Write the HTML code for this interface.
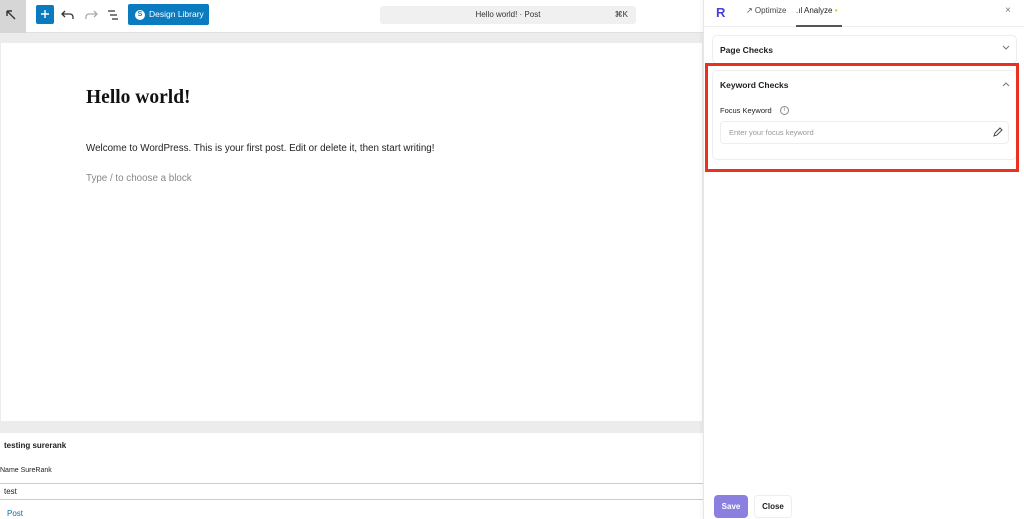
<!DOCTYPE html>
<html><head><style>
*{box-sizing:border-box;margin:0;padding:0}
body{width:1024px;height:519px;overflow:hidden;background:#fff;font-family:"Liberation Sans",sans-serif;position:relative;color:#1e1e1e}
.abs{position:absolute}
</style></head><body>
<div class="abs" style="left:0;top:0;width:703px;height:33px;background:#fff;border-bottom:1px solid #e0e0e0"></div>
<div class="abs" style="left:0;top:0;width:26px;height:33px;background:#d6d6d6"></div>
<svg class="abs" style="left:6px;top:10px" width="10" height="10" viewBox="0 0 10 10"><path d="M1 1L9 9M1 1h5M1 1v5" stroke="#333" stroke-width="1.4" fill="none"/></svg>
<div class="abs" style="left:36px;top:5px;width:18px;height:19px;background:#0a7bbf;border-radius:2px"></div>
<svg class="abs" style="left:40px;top:9px" width="10" height="10"><path d="M5 1v8M1 5h8" stroke="#fff" stroke-width="1.4"/></svg>
<svg class="abs" style="left:61px;top:9px" width="14" height="12" viewBox="0 0 14 12"><path d="M4 2L1 5l3 3M1 5h8a3 3 0 0 1 3 3v2" stroke="#333" stroke-width="1.3" fill="none"/></svg>
<svg class="abs" style="left:84px;top:9px" width="14" height="12" viewBox="0 0 14 12"><path d="M10 2l3 3-3 3M13 5H5a3 3 0 0 0-3 3v2" stroke="#aaa" stroke-width="1.3" fill="none"/></svg>
<svg class="abs" style="left:107px;top:9px" width="12" height="12" viewBox="0 0 12 12"><path d="M1 2h7M3 6h7M5 10h6" stroke="#333" stroke-width="1.3"/></svg>
<div class="abs" style="left:128px;top:4px;width:81px;height:21px;background:#0a7bbf;border-radius:2px;color:#fff;font-size:8.5px;line-height:21px;padding-left:21px">Design Library</div>
<div class="abs" style="left:135px;top:10px;width:10px;height:10px;border-radius:50%;background:#fff;color:#0a7bbf;font-size:7px;font-weight:bold;line-height:10px;text-align:center">S</div>
<div class="abs" style="left:380px;top:6px;width:256px;height:18px;background:#f0f0f0;border-radius:3px;font-size:8px;line-height:18px;text-align:center;color:#333">Hello world! · Post<span style="position:absolute;right:8px">⌘K</span></div>
<div class="abs" style="left:0;top:33px;width:703px;height:400px;background:#ececec"></div>
<div class="abs" style="left:1px;top:43px;width:701px;height:378px;background:#fff"></div>
<div class="abs" style="left:86px;top:87px;font-family:'Liberation Serif',serif;font-weight:bold;font-size:19.5px;color:#111">Hello world!</div>
<div class="abs" style="left:86px;top:143px;font-size:9.8px;color:#222">Welcome to WordPress. This is your first post. Edit or delete it, then start writing!</div>
<div class="abs" style="left:86px;top:173px;font-size:9.8px;color:#888">Type / to choose a block</div>
<div class="abs" style="left:0;top:433px;width:703px;height:86px;background:#fff"></div>
<div class="abs" style="left:4px;top:441px;font-size:8px;font-weight:bold">testing surerank</div>
<div class="abs" style="left:0;top:467px;font-size:7px">Name SureRank</div>
<div class="abs" style="left:0;top:483px;width:703px;height:17px;border-top:1px solid #ccc;border-bottom:1px solid #ccc;font-size:8px;line-height:16px;padding-left:4px">test</div>
<div class="abs" style="left:7px;top:509px;font-size:8px;color:#0a6ea8">Post</div>
<div class="abs" style="left:703px;top:0;width:321px;height:519px;background:#fff;border-left:1px solid #e6e6e6;box-shadow:-2px 0 4px rgba(0,0,0,.04)"></div>
<div class="abs" style="left:703px;top:26px;width:321px;height:1px;background:#eee"></div>
<div class="abs" style="left:716px;top:5px;font-size:13px;font-weight:bold;color:#4b3fd6">R</div>
<div class="abs" style="left:746px;top:6px;font-size:8px;color:#444">↗ Optimize</div>
<div class="abs" style="left:796px;top:6px;font-size:8px;color:#222">.ıl Analyze <span style="color:#d6c21a">•</span></div>
<div class="abs" style="left:796px;top:25px;width:46px;height:1.5px;background:#555"></div>
<div class="abs" style="left:1005px;top:5px;font-size:10px;color:#777">×</div>
<div class="abs" style="left:712px;top:35px;width:305px;height:29px;border:1px solid #eee;border-radius:5px"></div>
<div class="abs" style="left:720px;top:45px;font-size:8.5px;font-weight:bold">Page Checks</div>
<svg class="abs" style="left:1002px;top:45px" width="8" height="6"><path d="M1 1l3 3 3-3" stroke="#777" fill="none"/></svg>
<div class="abs" style="left:712px;top:70px;width:305px;height:90px;border:1px solid #eee;border-radius:5px"></div>
<div class="abs" style="left:720px;top:80px;font-size:8.5px;font-weight:bold">Keyword Checks</div>
<svg class="abs" style="left:1002px;top:81px" width="8" height="6"><path d="M1 5l3-3 3 3" stroke="#777" fill="none"/></svg>
<div class="abs" style="left:720px;top:106px;font-size:7.5px">Focus Keyword</div>
<div class="abs" style="left:780px;top:106px;width:9px;height:9px;border:1px solid #888;border-radius:50%;font-size:6px;text-align:center;line-height:7px;color:#888">i</div>
<div class="abs" style="left:720px;top:121px;width:289px;height:23px;border:1px solid #eee;border-radius:4px;font-size:7.5px;color:#999;line-height:21px;padding-left:8px">Enter your focus keyword</div>
<svg class="abs" style="left:993px;top:127px" width="10" height="10" viewBox="0 0 10 10"><path d="M1 9l1-3 5-5 2 2-5 5z" stroke="#444" fill="none"/></svg>
<div class="abs" style="left:705px;top:63px;width:314px;height:109px;border:3px solid #e8321f"></div>
<div class="abs" style="left:714px;top:495px;width:34px;height:23px;background:#8b7fe0;border-radius:4px;color:#fff;font-size:8px;font-weight:bold;line-height:23px;text-align:center">Save</div>
<div class="abs" style="left:754px;top:495px;width:38px;height:23px;border:1px solid #eee;border-radius:4px;font-size:8px;font-weight:bold;line-height:21px;text-align:center">Close</div>
</body></html>
